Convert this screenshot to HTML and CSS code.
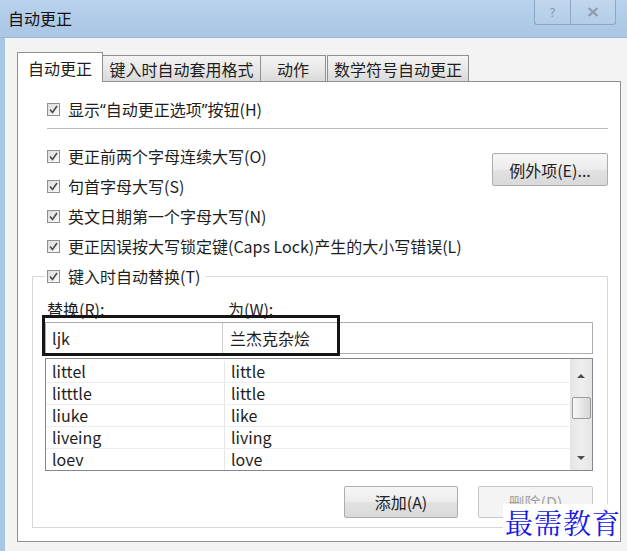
FILE: index.html
```html
<!DOCTYPE html>
<html lang="zh-CN">
<head>
<meta charset="utf-8">
<title>自动更正</title>
<link rel="stylesheet" href="styles.css">
</head>
<body>
<div class="window">
  <header class="titlebar">
    <span class="title">自动更正</span>
    <div class="caption-buttons">
      <span class="cap-btn help">?</span>
      <span class="cap-btn close"><svg width="12" height="10" viewBox="0 0 12 10"><path d="M1.5 1 L10.5 9 M10.5 1 L1.5 9" stroke="#8c9bb0" stroke-width="2.2" fill="none"/></svg></span>
    </div>
  </header>
  <main class="client">
    <nav class="tabs">
      <span class="tab active t1">自动更正</span>
      <span class="tab t2">键入时自动套用格式</span>
      <span class="tab t3">动作</span>
      <span class="tab t4">数学符号自动更正</span>
    </nav>
    <section class="panel">
      <label class="chk indent"><span class="box"><svg width="11" height="11" viewBox="0 0 11 11"><path d="M2 5.5 L4.5 8.5 L9 2" stroke="#4a4a4a" stroke-width="1.6" fill="none"/></svg></span><span>显示<span class="q">“</span>自动更正选项<span class="q">”</span>按钮(H)</span></label>
      <hr class="sep">
      <div class="opts">
        <div class="opt-list">
          <label class="chk"><span class="box"><svg width="11" height="11" viewBox="0 0 11 11"><path d="M2 5.5 L4.5 8.5 L9 2" stroke="#4a4a4a" stroke-width="1.6" fill="none"/></svg></span><span>更正前两个字母连续大写(O)</span></label>
          <label class="chk"><span class="box"><svg width="11" height="11" viewBox="0 0 11 11"><path d="M2 5.5 L4.5 8.5 L9 2" stroke="#4a4a4a" stroke-width="1.6" fill="none"/></svg></span><span>句首字母大写(S)</span></label>
          <label class="chk"><span class="box"><svg width="11" height="11" viewBox="0 0 11 11"><path d="M2 5.5 L4.5 8.5 L9 2" stroke="#4a4a4a" stroke-width="1.6" fill="none"/></svg></span><span>英文日期第一个字母大写(N)</span></label>
          <label class="chk"><span class="box"><svg width="11" height="11" viewBox="0 0 11 11"><path d="M2 5.5 L4.5 8.5 L9 2" stroke="#4a4a4a" stroke-width="1.6" fill="none"/></svg></span><span>更正因误按大写锁定键(Caps Lock)产生的大小写错误(L)</span></label>
        </div>
        <button class="btn exceptions">例外项(E)...</button>
      </div>
      <fieldset class="group">
        <legend class="legend"><label class="chk"><span class="box"><svg width="11" height="11" viewBox="0 0 11 11"><path d="M2 5.5 L4.5 8.5 L9 2" stroke="#4a4a4a" stroke-width="1.6" fill="none"/></svg></span><span>键入时自动替换(T)</span></label></legend>
        <div class="heads"><span class="head-a">替换(R):</span><span class="head-b">为(W):</span></div>
        <div class="entry">
          <div class="cell cell-a">ljk</div>
          <div class="cell cell-b">兰杰克杂烩</div>
          <div class="highlight"></div>
        </div>
        <div class="list">
          <div class="rows">
            <div class="row"><span class="c1">littel</span><span class="c2">little</span></div>
            <div class="row"><span class="c1">litttle</span><span class="c2">little</span></div>
            <div class="row"><span class="c1">liuke</span><span class="c2">like</span></div>
            <div class="row"><span class="c1">liveing</span><span class="c2">living</span></div>
            <div class="row"><span class="c1">loev</span><span class="c2">love</span></div>
          </div>
          <div class="scrollbar">
            <div class="sb-up"><span class="arrow-up"></span></div>
            <div class="sb-thumb"></div>
            <div class="sb-track"></div>
            <div class="sb-down"><span class="arrow-down"></span></div>
          </div>
        </div>
        <div class="actions">
          <button class="btn add">添加(A)</button>
          <button class="btn del" disabled>删除(D)</button>
        </div>
      </fieldset>
    </section>
  </main>
</div>
<div class="watermark">最需教育</div>
</body>
</html>
```
FILE: styles.css
```css
html, body {
  margin: 0;
  padding: 0;
}
body {
  width: 627px;
  height: 551px;
  overflow: hidden;
  position: relative;
  background: #f0f0f0;
  font-family: "Noto Sans CJK SC", "Noto Sans", sans-serif;
  font-size: 16px;
  color: #1e1e1e;
}
.window {
  width: 627px;
  height: 551px;
  display: flex;
  flex-direction: column;
}
.titlebar {
  height: 38px;
  flex: none;
  display: flex;
  background: linear-gradient(#b9d2ec, #a9c6e5);
  box-sizing: border-box;
  border-bottom: 1px solid #9fbad8;
}
.title {
  padding: 8px 0 0 8px;
  font-size: 16px;
  line-height: 20px;
  color: #111;
}
.caption-buttons {
  margin-left: auto;
  margin-right: 11px;
  display: flex;
  height: 25px;
}
.cap-btn {
  box-sizing: border-box;
  height: 25px;
  display: flex;
  align-items: center;
  justify-content: center;
  background: linear-gradient(#c2d7ee, #b3cce8);
  border: 1px solid #8fa6c2;
  border-top: none;
  color: #8c9bb0;
  font-family: "DejaVu Sans", sans-serif;
  font-size: 13px;
}
.help {
  width: 36px;
  border-right: none;
  border-radius: 0 0 0 3px;
}
.close {
  width: 46px;
  border-radius: 0 0 3px 0;
}
.client {
  flex: 1;
  display: flex;
  flex-direction: column;
  border-left: 5px solid #a9c6e5;
  padding: 14px 6px 9px 12px;
  background: #f3f3f3;
}
.tabs {
  height: 30px;
  margin-bottom: -1px;
  display: flex;
  align-items: flex-end;
  position: relative;
  z-index: 1;
}
.tab {
  box-sizing: border-box;
  height: 26px;
  margin-bottom: 1px;
  border: 1px solid #8e8f8f;
  border-bottom: none;
  background: linear-gradient(#f4f4f4, #e8e8e8 50%, #dadada);
  display: flex;
  align-items: center;
  justify-content: center;
  font-size: 16px;
  line-height: 20px;
  white-space: nowrap;
}
.tab.active {
  height: 30px;
  margin-bottom: 0;
  background: #fff;
}
.t1 { width: 86px; }
.t2 { width: 158px; border-left: none; }
.t3 { width: 65px; border-left: none; }
.t4 { width: 142px; margin-left: 1px; }
.panel {
  box-sizing: border-box;
  height: 461px;
  flex: none;
  border: 1px solid #8c8f95;
  background: #fff;
  padding: 12px 12px 0 14px;
}
.chk {
  display: flex;
  align-items: center;
  height: 30px;
  gap: 8px;
  white-space: nowrap;
  line-height: 20px;
}
.indent {
  margin-left: 15px;
}
.box {
  box-sizing: border-box;
  width: 13px;
  height: 13px;
  flex: none;
  border: 1px solid #8e8f8f;
  background: linear-gradient(135deg, #dcdcdc, #fbfbfb);
  display: flex;
  align-items: center;
  justify-content: center;
}
.box svg {
  display: block;
}
.q {
  font-family: "Noto Sans", sans-serif;
}
.sep {
  margin: 4px 0 0 15px;
  border: none;
  border-top: 1px solid #bcbcbc;
  height: 0;
}
.opts {
  margin-top: 12px;
  padding-left: 15px;
  display: flex;
  justify-content: space-between;
  align-items: flex-start;
}
.btn {
  box-sizing: border-box;
  font-family: "Noto Sans CJK SC", "Noto Sans", sans-serif;
  font-size: 16px;
  color: #222;
  border: 1px solid #adadad;
  border-radius: 2px;
  background: linear-gradient(#f6f6f6, #ececec 50%, #e2e2e2 51%, #d9d9d9);
  padding: 0;
  line-height: 20px;
}
.exceptions {
  margin-top: 12px;
  width: 116px;
  height: 33px;
}
.group {
  margin: 0;
  padding: 0 14px 9px 12px;
  border: 1px solid #d3d6da;
  min-inline-size: 0;
}
.legend {
  padding: 0 6px 0 2px;
}
.heads {
  margin-top: 9px;
  height: 18px;
  margin-bottom: 4px;
  display: grid;
  grid-template-columns: 183px 1fr;
  line-height: 18px;
}
.head-a {
  padding-left: 2px;
}
.entry {
  position: relative;
  box-sizing: border-box;
  height: 32px;
  border: 1px solid #aaadb3;
  display: grid;
  grid-template-columns: 177px 1fr;
}
.cell {
  display: flex;
  align-items: center;
  line-height: 20px;
}
.cell-a {
  padding-left: 6px;
  border-right: 1px solid #cfcfcf;
}
.cell-b {
  padding-left: 7px;
}
.highlight {
  position: absolute;
  left: -4px;
  top: -8px;
  width: 298px;
  height: 41px;
  box-sizing: border-box;
  border: 3px solid #151515;
}
.list {
  margin-top: 4px;
  box-sizing: border-box;
  height: 113px;
  border: 1px solid #828790;
  display: flex;
  overflow: hidden;
}
.rows {
  flex: 1;
  padding-top: 2px;
}
.row {
  box-sizing: border-box;
  height: 22px;
  display: grid;
  grid-template-columns: 178px 1fr;
  border-bottom: 1px solid #ececec;
  line-height: 20px;
}
.row:last-child {
  border-bottom: none;
}
.c1 {
  padding-left: 6px;
}
.c2 {
  padding-left: 6px;
  border-left: 1px solid #e6e6e6;
}
.scrollbar {
  width: 22px;
  flex: none;
  display: flex;
  flex-direction: column;
  align-items: center;
  background: linear-gradient(90deg, #e4e4e4, #eeeeee 50%, #e6e6e6);
}
.sb-up {
  height: 33px;
  width: 100%;
  display: flex;
  align-items: center;
  justify-content: center;
}
.sb-down {
  height: 24px;
  width: 100%;
  display: flex;
  align-items: center;
  justify-content: center;
}
.arrow-up {
  width: 0;
  height: 0;
  border-left: 4px solid transparent;
  border-right: 4px solid transparent;
  border-bottom: 4px solid #4d4d4d;
}
.arrow-down {
  width: 0;
  height: 0;
  border-left: 4px solid transparent;
  border-right: 4px solid transparent;
  border-top: 4px solid #4d4d4d;
}
.sb-thumb {
  box-sizing: border-box;
  margin-top: 5px;
  width: 19px;
  height: 22px;
  border: 1px solid #9b9b9b;
  border-radius: 2px;
  background: linear-gradient(90deg, #f7f7f7, #e8e8e8 50%, #d6d6d6);
}
.sb-track {
  flex: 1;
}
.actions {
  margin-top: 15px;
  display: flex;
  justify-content: flex-end;
  gap: 20px;
}
.add {
  width: 114px;
  height: 32px;
}
.del {
  width: 115px;
  height: 32px;
  color: #a3a3a3;
  border-color: #c6c6c6;
  background: #f4f4f4;
}
.watermark {
  position: absolute;
  left: 503px;
  top: 504px;
  width: 116px;
  height: 36px;
  background: #fff;
  color: #1717e6;
  font-family: "Noto Serif CJK SC", "AR PL UMing CN", "Noto Sans CJK SC", serif;
  font-size: 28px;
  line-height: 36px;
  letter-spacing: 1px;
  white-space: nowrap;
  padding-left: 2px;
  box-sizing: border-box;
}
```
